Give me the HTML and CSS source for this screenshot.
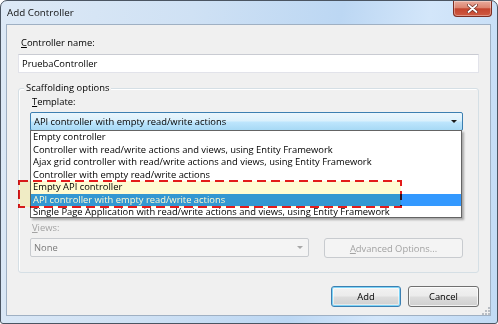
FILE: index.html
```html
<!DOCTYPE html>
<html lang="en">
<head>
    <meta charset="UTF-8">
    <title>Add Controller</title>
    <link rel="stylesheet" href="styles.css">
</head>
<body>
    <div class="window">
        <div class="titlebar">
            <span class="title">Add Controller</span>
            <button type="button" class="close-btn" aria-label="Close">
                <svg width="11" height="9" viewBox="0 0 11 9">
                    <path d="M1.5 1 L9.5 8 M9.5 1 L1.5 8" stroke="#6b2a20" stroke-width="3.2" stroke-linecap="round"/>
                    <path d="M1.5 1 L9.5 8 M9.5 1 L1.5 8" stroke="#fff" stroke-width="1.8" stroke-linecap="round"/>
                </svg>
            </button>
        </div>

        <div class="client">
            <label class="field-label" for="controller-name"><u>C</u>ontroller name:</label>
            <div class="textbox" id="controller-name">PruebaController</div>

            <div class="group">
                <span class="legend">Scaffolding options</span>
                <div class="field-label indent"><u>T</u>emplate:</div>
                <div class="combo combo-hover">
                    <span>API controller with empty read/write actions</span>
                    <span class="arrow"></span>
                </div>

                <div class="field-label indent disabled views-label"><u>V</u>iews:</div>
                <div class="views-row">
                    <div class="combo combo-disabled">
                        <span>None</span>
                        <span class="arrow"></span>
                    </div>
                    <button type="button" class="btn btn-disabled advanced-btn"><u>A</u>dvanced Options...</button>
                </div>
            </div>

            <div class="actions">
                <button type="button" class="btn btn-default">Add</button>
                <button type="button" class="btn">Cancel</button>
            </div>

            <!-- open dropdown of the template combo -->
            <ul class="dropdown">
                <li>Empty controller</li>
                <li>Controller with read/write actions and views, using Entity Framework</li>
                <li>Ajax grid controller with read/write actions and views, using Entity Framework</li>
                <li>Controller with empty read/write actions</li>
                <li>Empty API controller</li>
                <li class="selected">API controller with empty read/write actions</li>
                <li>Single Page Application with read/write actions and views, using Entity Framework</li>
            </ul>

            <svg class="mark" width="384" height="28" viewBox="0 0 384 28">
                <rect x="1" y="1" width="382" height="26" fill="#fffbd2" stroke="#e31b1b" stroke-width="2" stroke-dasharray="9 5"/>
            </svg>

            <svg class="grip" width="8" height="8" viewBox="0 0 8 8">
                <g fill="#b9bec4">
                    <rect x="6" y="0" width="2" height="2"/>
                    <rect x="3" y="3" width="2" height="2"/>
                    <rect x="6" y="3" width="2" height="2"/>
                    <rect x="0" y="6" width="2" height="2"/>
                    <rect x="3" y="6" width="2" height="2"/>
                    <rect x="6" y="6" width="2" height="2"/>
                </g>
            </svg>
        </div>
    </div>
</body>
</html>
```

FILE: styles.css
```css
body {
    margin: 0;
    padding: 0;
    background: #fff;
    font-family: "Open Sans", "Noto Sans", sans-serif;
    font-size: 9.4px;
    color: #000;
}

.window {
    width: 498px;
    height: 324px;
    box-sizing: border-box;
    border: 1px solid #4b5562;
    border-radius: 7px 7px 3px 3px;
    background: linear-gradient(100deg, #dde9f6 0%, #cfe1f4 35%, #bcd7f3 62%, #d3e6fa 78%, #c1daf4 100%);
    display: flex;
    flex-direction: column;
    overflow: hidden;
}

.titlebar {
    height: 23px;
    display: flex;
    justify-content: space-between;
    align-items: flex-start;
    padding: 0 5px 0 6px;
}

.title {
    font-size: 9.8px;
    line-height: 23px;
    color: #111;
}

.close-btn {
    width: 39px;
    height: 16px;
    padding: 0;
    border: 1px solid #7d2d22;
    border-top: none;
    border-radius: 0 0 4px 4px;
    background: linear-gradient(#e9ab9c 0%, #dc8470 45%, #c4442e 52%, #cf5a42 100%);
    box-shadow: inset 0 0 0 1px rgba(255, 255, 255, 0.35);
    display: flex;
    align-items: center;
    justify-content: center;
}

.client {
    position: relative;
    flex: 1;
    margin: 0 6px 7px 5px;
    padding: 11px 11px 0 11px;
    border: 1px solid #9fb0c3;
    background: #f0f0f0;
}

.field-label {
    display: block;
    line-height: 14px;
    margin-left: 3px;
    margin-bottom: 4px;
}

.field-label.indent {
    margin-left: 2px;
    margin-bottom: 3px;
}

.disabled {
    color: #a3a3a3;
}

.views-label {
    margin-top: 90px;
    margin-bottom: 4px;
}

.textbox {
    height: 19px;
    box-sizing: border-box;
    border: 1px solid #e2e3ea;
    border-top-color: #c9cbd2;
    background: #fff;
    padding-left: 3px;
    line-height: 17px;
}

.group {
    position: relative;
    margin-top: 15px;
    padding: 6px 15px 14px 11px;
    border: 1px solid #d5dfe5;
    border-radius: 3px;
    box-shadow: inset 1px 1px 0 #fff;
}

.legend {
    position: absolute;
    top: -8px;
    left: 5px;
    padding: 0 2px;
    line-height: 14px;
    background: #f0f0f0;
}

.combo {
    position: relative;
    height: 19px;
    box-sizing: border-box;
    padding-left: 3px;
    line-height: 17px;
    border-radius: 2px;
}

.combo-hover {
    border: 1px solid #3c7fb1;
    background: linear-gradient(#eaf6fd 0%, #d9f0fc 48%, #bee6fd 52%, #a7d9f5 100%);
}

.combo-disabled {
    width: 279px;
    border: 1px solid #c8cbcf;
    background: #f4f4f4;
    color: #7a7a7a;
}

.arrow {
    position: absolute;
    right: 5px;
    top: 7px;
    width: 0;
    height: 0;
    border-left: 3px solid transparent;
    border-right: 3px solid transparent;
    border-top: 3px solid #1a1a1a;
}

.combo-disabled .arrow {
    border-top-color: #a8a8a8;
}

.views-row {
    display: flex;
    justify-content: space-between;
}

.btn {
    font-family: inherit;
    font-size: 9.4px;
    color: #000;
    height: 21px;
    width: 71px;
    padding: 0;
    box-sizing: border-box;
    border: 1px solid #707070;
    border-radius: 3px;
    background: linear-gradient(#f2f2f2 0%, #ebebeb 48%, #dddddd 52%, #cfcfcf 100%);
    box-shadow: inset 0 0 0 1px rgba(255, 255, 255, 0.7);
}

.btn-default {
    width: 70px;
    border-color: #3c7fb1;
    box-shadow: inset 0 0 0 1px #7ed4f7, inset 0 0 0 2px rgba(255, 255, 255, 0.5);
}

.btn-disabled {
    width: 139px;
    height: 20px;
    border-color: #c8cbcf;
    background: #f4f4f4;
    color: #a3a3a3;
    box-shadow: none;
}

.actions {
    display: flex;
    justify-content: flex-end;
    gap: 7px;
    margin-top: 13px;
}

.dropdown {
    position: absolute;
    left: 23px;
    top: 105px;
    width: 432px;
    height: 88px;
    box-sizing: border-box;
    margin: 0;
    padding: 0;
    list-style: none;
    background: #fff;
    border: 1px solid #646464;
    box-shadow: 2px 2px 2px rgba(0, 0, 0, 0.3);
}

.dropdown li {
    height: 12.5px;
    line-height: 12.5px;
    padding-left: 2px;
    white-space: nowrap;
    color: #000;
}

.dropdown li.selected {
    background: #3399ff;
    color: #fff;
}

.mark {
    position: absolute;
    left: 11px;
    top: 155px;
    mix-blend-mode: multiply;
}

.grip {
    position: absolute;
    right: 0;
    bottom: 0;
}
```
